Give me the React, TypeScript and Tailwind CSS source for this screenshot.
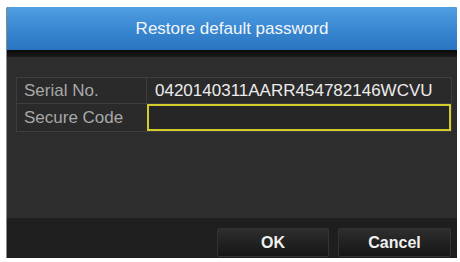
import React from "react";

export default function App() {
  const font = { fontFamily: '"Liberation Sans", Arial, sans-serif' };
  return (
    <div className="w-[460px] h-[262px] bg-white pt-[7px] pl-[6px]" style={font}>
      <div className="w-[451px] h-[251px] flex flex-col bg-[#2d2d2d] border-l border-[#8a8a8a] rounded-t-[2px] overflow-hidden">
        <div className="h-[43px] flex items-center justify-center bg-gradient-to-b from-[#4f9fe2] via-[#3a88d2] to-[#2a74c0] text-[17px] text-[#f2f6fa]">
          Restore default password
        </div>
        <div className="h-[7px] bg-gradient-to-b from-[#0a0a0a] to-[#1a1a1a]" />
        <div className="flex-1 pt-[20px] pl-[9px] pr-[5px]">
          <div className="flex flex-col border border-[#3e3e3e] bg-[#2a2a2a]">
            <div className="flex h-[26px] border-b border-[#3e3e3e]">
              <div className="w-[130px] flex items-center pl-[7px] text-[17px] text-[#a8a8a8] border-r border-[#3e3e3e]">
                Serial No.
              </div>
              <div className="flex-1 flex items-center pl-[8px] text-[17px] text-[#ececec]">
                0420140311AARR454782146WCVU
              </div>
            </div>
            <div className="flex h-[27px]">
              <div className="w-[130px] flex items-center pl-[7px] text-[17px] text-[#a8a8a8]">
                Secure Code
              </div>
              <div className="flex-1 border-2 border-[#d3cd2c] bg-[#262626]" />
            </div>
          </div>
        </div>
        <div className="h-[40px] bg-[#1e1e1e] flex justify-end items-start pt-[10px] pr-[6px] gap-[9px]">
          <button className="w-[112px] h-[29px] rounded-[2px] border border-[#333] bg-gradient-to-b from-[#2e2e2e] to-[#161616] text-[16px] font-bold text-[#f0f0f0]">
            OK
          </button>
          <button className="w-[113px] h-[29px] rounded-[2px] border border-[#333] bg-gradient-to-b from-[#2e2e2e] to-[#161616] text-[16px] font-bold text-[#f0f0f0]">
            Cancel
          </button>
        </div>
      </div>
    </div>
  );
}
